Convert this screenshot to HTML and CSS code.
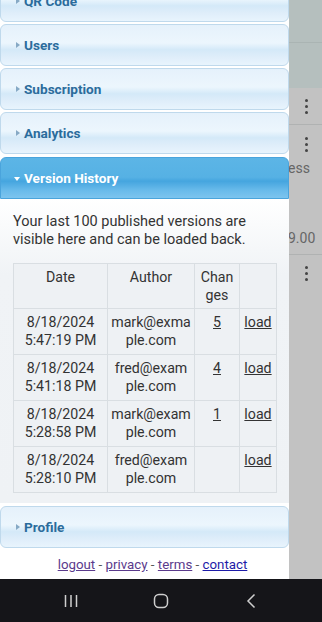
FILE: index.html
```html
<!DOCTYPE html>
<html lang="en">
<head>
  <meta charset="UTF-8">
  <meta name="viewport" content="width=device-width, initial-scale=1">
  <title>Settings</title>
  <link rel="stylesheet" href="styles.css">
</head>
<body>
  <div class="screen">
    <div class="panel">
      <div class="collapsible first">
        <div class="coll-head"><span class="arrow"></span>QR Code</div>
      </div>
      <div class="collapsible">
        <div class="coll-head"><span class="arrow"></span>Users</div>
      </div>
      <div class="collapsible">
        <div class="coll-head"><span class="arrow"></span>Subscription</div>
      </div>
      <div class="collapsible">
        <div class="coll-head"><span class="arrow"></span>Analytics</div>
      </div>
      <div class="collapsible open">
        <div class="coll-head"><span class="arrow"></span>Version History</div>
        <div class="coll-body">
          <p class="intro">Your last 100 published versions are visible here and can be loaded back.</p>
          <table class="versions">
            <colgroup>
              <col class="c-date">
              <col class="c-author">
              <col class="c-changes">
              <col class="c-load">
            </colgroup>
            <thead>
              <tr><th>Date</th><th>Author</th><th>Chan<wbr>ges</th><th></th></tr>
            </thead>
            <tbody>
              <tr>
                <td>8/18/2024 5:47:19 PM</td>
                <td class="author">mark@exma<wbr>ple.com</td>
                <td><a href="#">5</a></td>
                <td><a href="#">load</a></td>
              </tr>
              <tr>
                <td>8/18/2024 5:41:18 PM</td>
                <td class="author">fred@exam<wbr>ple.com</td>
                <td><a href="#">4</a></td>
                <td><a href="#">load</a></td>
              </tr>
              <tr>
                <td>8/18/2024 5:28:58 PM</td>
                <td class="author">mark@exam<wbr>ple.com</td>
                <td><a href="#">1</a></td>
                <td><a href="#">load</a></td>
              </tr>
              <tr>
                <td>8/18/2024 5:28:10 PM</td>
                <td class="author">fred@exam<wbr>ple.com</td>
                <td></td>
                <td><a href="#">load</a></td>
              </tr>
            </tbody>
          </table>
        </div>
      </div>
      <div class="collapsible">
        <div class="coll-head"><span class="arrow"></span>Profile</div>
      </div>
      <div class="footer">
        <a class="visited" href="#">logout</a> - <a class="visited" href="#">privacy</a> - <a class="visited" href="#">terms</a> - <a href="#">contact</a>
      </div>
    </div>

    <div class="underlay">
      <div class="ul-row green line"></div>
      <div class="ul-row green tall"></div>
      <div class="ul-row grey short line"><span class="kebab"><i></i><i></i><i></i></span></div>
      <div class="ul-row grey big line">
        <span class="kebab"><i></i><i></i><i></i></span>
        <span class="cut ess">ess</span>
        <span class="cut price">9.00</span>
      </div>
      <div class="ul-row grey rest"><span class="kebab"><i></i><i></i><i></i></span></div>
    </div>
  </div>

  <div class="navbar">
    <div class="nav-slot">
      <svg width="14" height="14" viewBox="0 0 14 14">
        <path d="M1.5 1v12M7 1v12M12.5 1v12" stroke="#cfcfcf" stroke-width="1.5" fill="none"/>
      </svg>
    </div>
    <div class="nav-slot">
      <svg width="16" height="16" viewBox="0 0 16 16">
        <rect x="1.5" y="1.5" width="13" height="13" rx="4.5" stroke="#cfcfcf" stroke-width="1.5" fill="none"/>
      </svg>
    </div>
    <div class="nav-slot">
      <svg width="10" height="16" viewBox="0 0 10 16">
        <path d="M8.5 1.5L2 8l6.5 6.5" stroke="#cfcfcf" stroke-width="1.5" fill="none"/>
      </svg>
    </div>
  </div>
</body>
</html>
```

FILE: styles.css
```css
html, body {
  margin: 0;
  padding: 0;
}

body {
  font-family: Roboto, 'Liberation Sans', sans-serif;
  font-size: 14.5px;
  color: #333333;
  width: 322px;
  height: 622px;
  overflow: hidden;
  background: #ffffff;
}

.screen {
  display: flex;
  height: 579px;
  overflow: hidden;
}

.panel {
  width: 289px;
  flex: none;
  background: #ffffff;
}

/* collapsible blocks */
.collapsible {
  margin-bottom: 2px;
}

.collapsible.first {
  margin-top: -20px;
}

.coll-head {
  height: 40px;
  line-height: 40px;
  border: 1px solid #bfd9ec;
  border-radius: 6px;
  background: linear-gradient(to bottom, #e5f1fb 0%, #ecf6fd 45%, #d4e9f8 62%, #e0eefa 82%, #e8f4fd 100%);
  color: #2b6c9c;
  font-weight: bold;
  font-size: 13.6px;
  padding-left: 23px;
  position: relative;
}

.arrow {
  position: absolute;
  left: 15px;
  top: 17px;
  width: 0;
  height: 0;
  border-top: 3.5px solid transparent;
  border-bottom: 3.5px solid transparent;
  border-left: 4px solid #86a9c5;
}

.open {
  margin-top: 3px;
}

.open .coll-head {
  border-color: #4aa4dc;
  border-radius: 6px 6px 0 0;
  background: linear-gradient(to bottom, #5cb5e6 0%, #56b1e4 48%, #45a5df 58%, #68baea 80%, #7cc4ee 100%);
  color: #ffffff;
}

.open .arrow {
  left: 13px;
  top: 19px;
  border-left: 3.5px solid transparent;
  border-right: 3.5px solid transparent;
  border-top: 4px solid #ffffff;
  border-bottom: 0;
}

.coll-body {
  background: linear-gradient(to bottom, #ffffff 0%, #f0f3f6 25%, #eff2f5 100%);
  padding: 14px 13px 10px;
  margin-bottom: 3px;
}

.intro {
  margin: 0 0 14px;
  line-height: 18px;
}

/* version table */
.versions {
  border-collapse: collapse;
  table-layout: fixed;
  width: 263px;
  font-size: 14.2px;
  overflow-wrap: anywhere;
}

.c-date { width: 94px; }
.c-author { width: 87px; }
.c-changes { width: 45px; }
.c-load { width: 37px; }

.versions th,
.versions td {
  border: 1px solid #d9dee2;
  background: #eef1f4;
  padding: 4px 4px 5px;
  line-height: 18px;
  font-weight: normal;
  text-align: center;
  vertical-align: top;
}

.versions th {
  padding-bottom: 4px;
}

.versions td.author {
  padding-left: 2px;
  padding-right: 2px;
}

.versions a {
  color: #333333;
}

/* footer links */
.footer {
  height: 31px;
  line-height: 30px;
  text-align: center;
  padding-left: 16px;
  font-size: 13.3px;
  color: #555555;
}

.footer a {
  color: #1d1ba8;
}

.footer a.visited {
  color: #5b3b8c;
}

/* dimmed page under the panel */
.underlay {
  flex: 1;
  background: #c2c2c2;
  overflow: hidden;
}

.ul-row {
  position: relative;
  box-sizing: border-box;
}

.ul-row.line {
  border-bottom: 1px solid #b0b2b2;
}

.green {
  background: #b5bfbe;
}

.green.line {
  height: 43px;
  border-bottom-color: #aab4b3;
}

.green.tall {
  height: 45px;
}

.grey.short {
  height: 37px;
}

.grey.big {
  height: 130px;
}

.grey.rest {
  height: 324px;
}

.kebab {
  position: absolute;
  left: 16px;
  top: 11px;
  display: flex;
  flex-direction: column;
  gap: 3px;
}

.kebab i {
  width: 3px;
  height: 3px;
  border-radius: 50%;
  background: #444444;
}

.grey.big .kebab {
  top: 12px;
}

.cut {
  position: absolute;
  left: -1px;
  color: #666666;
  font-size: 14px;
  line-height: 18px;
}

.ess { top: 34px; }
.price { top: 104px; }

/* android navigation bar */
.navbar {
  height: 43px;
  background: #151519;
  display: flex;
  align-items: center;
  padding-left: 26px;
}

.nav-slot {
  width: 90px;
  display: flex;
  justify-content: center;
}

.nav-slot svg {
  display: block;
}
```
